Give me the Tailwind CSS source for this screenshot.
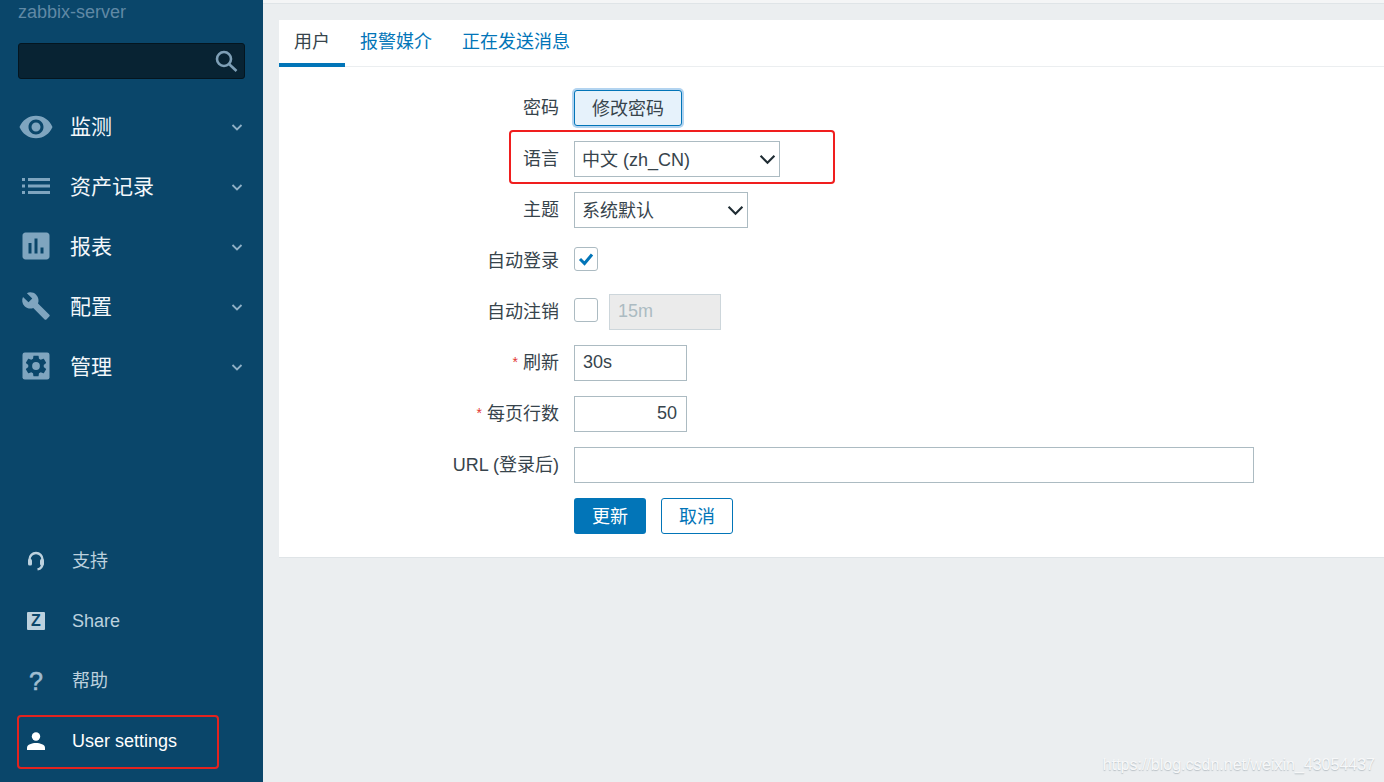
<!DOCTYPE html>
<html lang="zh-CN">

<head>
  <meta charset="UTF-8">
  <meta name="viewport" content="width=device-width, initial-scale=1.0">
  <title>User settings</title>
  <script src="https://cdn.jsdelivr.net/npm/@tailwindcss/browser@4"></script>
</head>

<body class="m-0 overflow-hidden">
  <div class="relative flex h-[782px] w-[1384px] overflow-hidden bg-[#ebeef0] font-['Liberation_Sans','Noto_Sans_CJK_SC',sans-serif] text-[18px] text-[#37444c]">

    <!-- Sidebar -->
    <aside class="flex h-full w-[263px] shrink-0 flex-col bg-[#0a466a]">
      <div class="h-[43px] pl-[18px]">
        <span class="block text-[18px] leading-[24px] text-[#6089a5]">zabbix-server</span>
      </div>
      <div class="mx-[18px] flex h-9 w-[227px] items-center justify-end rounded-[3px] border border-[#04151f] bg-[#082333] pr-[6px]">
        <svg class="h-[24px] w-[24px]" viewBox="0 0 24 24" fill="none" stroke="#7e9fb6" stroke-width="2.6">
          <circle cx="10" cy="10" r="7"/>
          <path d="M15 15l7.500 7"/>
        </svg>
      </div>

      <!-- Main menu -->
      <nav class="mt-[18px] flex flex-col">
        <a class="flex h-[60px] items-center text-[21px] text-[#f3f7fa]">
          <span class="flex w-[72px] shrink-0 justify-center">
            <svg class="h-[36px] w-[36px]" viewBox="0 0 24 24" fill="#7fa5bf"><path fill-rule="evenodd" d="M12 4.500C7 4.500 2.730 7.610 1 12c1.730 4.390 6 7.500 11 7.500s9.270-3.110 11-7.500c-1.730-4.390-6-7.500-11-7.500zM12 17c-2.760 0-5-2.240-5-5s2.240-5 5-5 5 2.240 5 5-2.240 5-5 5zm0-8c-1.660 0-3 1.340-3 3s1.340 3 3 3 3-1.340 3-3-1.340-3-3-3z"/></svg>
          </span>
          <span class="-ml-[2px] flex-1">监测</span>
          <svg class="mr-[19px] h-[14px] w-[14px]" viewBox="0 0 14 14" fill="none" stroke="#8fb0c6" stroke-width="1.8"><path d="M2.500 5l4.500 4.500L11.500 5"/></svg>
        </a>
        <a class="flex h-[60px] items-center text-[21px] text-[#f3f7fa]">
          <span class="flex w-[72px] shrink-0 justify-center">
            <svg class="-mt-[3px] h-[16px] w-[28px]" viewBox="0 0 28 16" fill="#7fa5bf">
              <rect x="0" y="0" width="3" height="3"/><rect x="6" y="0" width="22" height="3"/>
              <rect x="0" y="6.500" width="3" height="3"/><rect x="6" y="6.500" width="22" height="3"/>
              <rect x="0" y="13" width="3" height="3"/><rect x="6" y="13" width="22" height="3"/>
            </svg>
          </span>
          <span class="-ml-[2px] flex-1">资产记录</span>
          <svg class="mr-[19px] h-[14px] w-[14px]" viewBox="0 0 14 14" fill="none" stroke="#8fb0c6" stroke-width="1.8"><path d="M2.500 5l4.500 4.500L11.500 5"/></svg>
        </a>
        <a class="flex h-[60px] items-center text-[21px] text-[#f3f7fa]">
          <span class="flex w-[72px] shrink-0 justify-center">
            <svg class="-mt-[3px] h-[36px] w-[36px]" viewBox="0 0 24 24" fill="#7fa5bf"><path d="M19 3H5c-1.100 0-2 .9-2 2v14c0 1.100.9 2 2 2h14c1.100 0 2-.9 2-2V5c0-1.100-.9-2-2-2zM9 17H7v-7h2v7zm4 0h-2V7h2v10zm4 0h-2v-4h2v4z"/></svg>
          </span>
          <span class="-ml-[2px] flex-1">报表</span>
          <svg class="mr-[19px] h-[14px] w-[14px]" viewBox="0 0 14 14" fill="none" stroke="#8fb0c6" stroke-width="1.8"><path d="M2.500 5l4.500 4.500L11.500 5"/></svg>
        </a>
        <a class="flex h-[60px] items-center text-[21px] text-[#f3f7fa]">
          <span class="flex w-[72px] shrink-0 justify-center">
            <svg class="-mt-[3px] h-[30px] w-[30px]" viewBox="0 0 24 24" fill="#7fa5bf"><path d="M22.700 19l-9.100-9.100c.9-2.300.4-5-1.500-6.900-2-2-5-2.400-7.400-1.300L9 6 6 9 1.600 4.700C.4 7.100.9 10.100 2.900 12.100c1.900 1.900 4.600 2.400 6.900 1.500l9.100 9.100c.4.400 1 .4 1.400 0l2.300-2.300c.5-.4.5-1.100.1-1.400z"/></svg>
          </span>
          <span class="-ml-[2px] flex-1">配置</span>
          <svg class="mr-[19px] h-[14px] w-[14px]" viewBox="0 0 14 14" fill="none" stroke="#8fb0c6" stroke-width="1.8"><path d="M2.500 5l4.500 4.500L11.500 5"/></svg>
        </a>
        <a class="flex h-[60px] items-center text-[21px] text-[#f3f7fa]">
          <span class="flex w-[72px] shrink-0 justify-center">
            <svg class="-mt-[3px] h-[36px] w-[36px]" viewBox="0 0 24 24">
              <rect x="3" y="3" width="18" height="18" rx="1.500" fill="#7fa5bf"/>
              <g transform="translate(12 12) scale(.72) translate(-12 -12)">
                <path fill="#0a466a" d="M19.140 12.940c.04-.3.06-.61.06-.94 0-.32-.02-.64-.07-.94l2.030-1.580c.18-.14.23-.41.12-.61l-1.920-3.320c-.12-.22-.37-.29-.59-.22l-2.390.96c-.5-.38-1.030-.7-1.620-.94l-.36-2.540c-.04-.24-.24-.41-.48-.41h-3.840c-.24 0-.43.17-.47.41l-.36 2.540c-.59.24-1.130.57-1.620.94l-2.390-.96c-.22-.08-.47 0-.59.22L2.740 8.870c-.12.21-.08.47.12.61l2.030 1.580c-.05.3-.09.63-.09.94s.02.64.07.94l-2.030 1.580c-.18.14-.23.41-.12.61l1.920 3.320c.12.22.37.29.59.22l2.390-.96c.5.38 1.030.7 1.620.94l.36 2.540c.05.24.24.41.48.41h3.840c.24 0 .44-.17.47-.41l.36-2.540c.59-.24 1.130-.56 1.620-.94l2.390.96c.22.08.47 0 .59-.22l1.920-3.320c.12-.22.07-.47-.12-.61l-2.010-1.580z"/>
                <circle cx="12" cy="12" r="3.600" fill="#7fa5bf"/>
              </g>
            </svg>
          </span>
          <span class="-ml-[2px] flex-1">管理</span>
          <svg class="mr-[19px] h-[14px] w-[14px]" viewBox="0 0 14 14" fill="none" stroke="#8fb0c6" stroke-width="1.8"><path d="M2.500 5l4.500 4.500L11.500 5"/></svg>
        </a>
      </nav>

      <!-- Bottom menu -->
      <nav class="mt-auto mb-[11px] flex flex-col text-[#bcd1de]">
        <a class="flex h-[60px] items-center">
          <span class="flex w-[72px] shrink-0 justify-center">
            <svg class="h-[20px] w-[18px]" viewBox="0 0 18 20" fill="none" stroke="#bcd1de" stroke-width="2.400">
              <path d="M2.500 11V8.500a6.500 6.500 0 0 1 13 0V11"/>
              <path d="M15.500 12c0 3.500-1.500 5.800-5 6.400"/>
              <rect x="1" y="8" width="4" height="6.500" rx="1.500" fill="#bcd1de" stroke="none"/>
              <rect x="13" y="8" width="4" height="6.500" rx="1.500" fill="#bcd1de" stroke="none"/>
            </svg>
          </span>
          <span>支持</span>
        </a>
        <a class="flex h-[60px] items-center">
          <span class="flex w-[72px] shrink-0 justify-center">
            <span class="flex h-[18px] w-[18px] items-center justify-center rounded-[1px] bg-[#bcd1de] text-[16px] font-bold leading-none text-[#0a466a]">Z</span>
          </span>
          <span>Share</span>
        </a>
        <a class="flex h-[60px] items-center">
          <span class="flex w-[72px] shrink-0 justify-center text-[25px] leading-none text-[#9fbdd0] [-webkit-text-stroke:0.6px_#9fbdd0]">?</span>
          <span>帮助</span>
        </a>
        <a class="flex h-[60px] items-center text-white">
          <span class="flex w-[72px] shrink-0 justify-center">
            <svg class="h-[18px] w-[18px]" viewBox="0 0 18 18" fill="#fff">
              <circle cx="9" cy="4.500" r="4.200"/>
              <path d="M0 18v-2.500c0-2.800 5-4.500 9-4.500s9 1.700 9 4.500V18z"/>
            </svg>
          </span>
          <span>User settings</span>
        </a>
      </nav>
    </aside>

    <!-- Content -->
    <main class="flex min-w-0 flex-1 flex-col">
      <div class="h-[4px] shrink-0 border-b border-[#dfe4e7] bg-[#f4f5f6]"></div>
      <section class="mt-[16px] ml-[16px] h-[538px] border-b border-[#dfe4e7] bg-white">
        <!-- Tabs -->
        <ul class="flex h-[47px] border-b border-[#ebeef0] text-[18px] text-[#0275b8]">
          <li class="-mb-px flex h-[47px] items-center border-b-4 border-[#0275b8] px-[15px] pt-[1px] text-[#37444c]">用户</li>
          <li class="flex h-[46px] items-center px-[15px] pb-[2px]">报警媒介</li>
          <li class="flex h-[46px] items-center px-[15px] pb-[2px]">正在发送消息</li>
        </ul>

        <!-- Form -->
        <form class="flex flex-col gap-[15px] pt-[23px]">
          <div class="flex h-9 items-center">
            <label class="w-[295px] pr-[15px] text-right">密码</label>
            <button type="button" class="h-9 w-[108px] rounded-[3px] border border-[#0275b8] bg-[#e6f2fb] pt-[2px] text-[#37444c] shadow-[0_0_0_2px_#b3d4f0]">修改密码</button>
          </div>
          <div class="flex h-9 items-center">
            <label class="w-[295px] pr-[15px] text-right">语言</label>
            <div class="relative h-9 w-[206px]">
              <select class="h-9 w-full appearance-none rounded-none border border-[#acbbc2] bg-white pt-[2px] pl-[7px] text-[#37444c]"><option>中文 (zh_CN)</option></select>
              <svg class="pointer-events-none absolute top-[10px] right-[4px] h-[17px] w-[17px]" viewBox="0 0 16 16" fill="none" stroke="#1f2c33" stroke-width="2"><path d="M1.500 4.500L8 11l6.500-6.500"/></svg>
            </div>
          </div>
          <div class="flex h-9 items-center">
            <label class="w-[295px] pr-[15px] text-right">主题</label>
            <div class="relative h-9 w-[174px]">
              <select class="h-9 w-full appearance-none rounded-none border border-[#acbbc2] bg-white pt-[2px] pl-[7px] text-[#37444c]"><option>系统默认</option></select>
              <svg class="pointer-events-none absolute top-[10px] right-[4px] h-[17px] w-[17px]" viewBox="0 0 16 16" fill="none" stroke="#1f2c33" stroke-width="2"><path d="M1.500 4.500L8 11l6.500-6.500"/></svg>
            </div>
          </div>
          <div class="flex h-9 items-start">
            <label class="flex h-9 w-[295px] items-center justify-end pt-[1px] pr-[15px]">自动登录</label>
            <span class="mt-[4px] flex h-[24px] w-[24px] items-center justify-center rounded-[3px] border border-[#acbbc2] bg-white">
              <svg class="h-[16px] w-[16px]" viewBox="0 0 16 16" fill="none" stroke="#0275b8" stroke-width="3"><path d="M2 8l4.500 4.500L14 3.500"/></svg>
            </span>
          </div>
          <div class="flex h-9 items-start">
            <label class="flex h-9 w-[295px] items-center justify-end pt-[1px] pr-[15px]">自动注销</label>
            <span class="mt-[4px] h-[24px] w-[24px] rounded-[3px] border border-[#acbbc2] bg-white"></span>
            <input disabled value="15m" class="ml-[11px] h-9 w-[112px] border border-[#cdd6db] bg-[#ebebeb] px-[8px] pb-[2px] text-[#acbbc2]">
          </div>
          <div class="flex h-9 items-center">
            <label class="w-[295px] pr-[15px] text-right"><span class="relative -top-[2px] mr-[5px] text-[14px] text-[#e33734]">*</span>刷新</label>
            <input value="30s" class="h-9 w-[113px] border border-[#acbbc2] bg-white px-[8px] pb-[2px] text-[#37444c]">
          </div>
          <div class="flex h-9 items-center">
            <label class="w-[295px] pr-[15px] text-right"><span class="relative -top-[2px] mr-[5px] text-[14px] text-[#e33734]">*</span>每页行数</label>
            <input value="50" class="h-9 w-[113px] border border-[#acbbc2] bg-white px-[9px] pb-[2px] text-right text-[#37444c]">
          </div>
          <div class="flex h-9 items-center">
            <label class="w-[295px] pr-[15px] text-right">URL (登录后)</label>
            <input class="h-9 w-[680px] border border-[#acbbc2] bg-white px-[8px]">
          </div>
          <div class="flex h-9 items-center gap-[15px] pl-[295px]">
            <button type="button" class="h-9 w-[72px] rounded-[3px] bg-[#0275b8] pt-[2px] text-white">更新</button>
            <button type="button" class="h-9 w-[72px] rounded-[3px] border border-[#0275b8] bg-white pt-[2px] text-[#0275b8]">取消</button>
          </div>
        </form>
      </section>
    </main>

    <!-- Annotations and watermark over the screenshot -->
    <div class="absolute top-[130px] left-[509px] h-[54px] w-[326px] rounded-[4px] border-2 border-[#f01e1e]"></div>
    <div class="absolute top-[715px] left-[17px] h-[54px] w-[202px] rounded-[4px] border-2 border-[#e3231f]"></div>
    <div class="absolute top-[753px] right-[9px] text-[16px] text-[#f7f8f9] [text-shadow:0_1px_1px_#b9c0c5]">https://blog.csdn.net/weixin_43054437</div>
  </div>
</body>

</html>
